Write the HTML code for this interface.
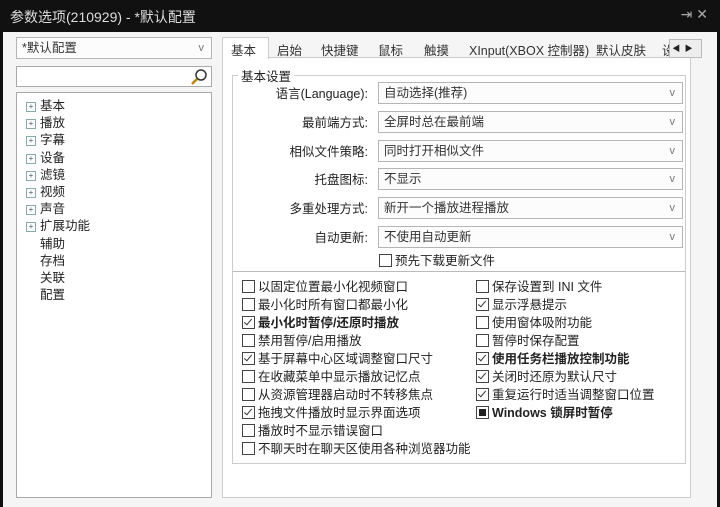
<html><head><style>
body{margin:0;width:720px;height:507px;background:#111;font-family:"Liberation Sans","Noto Sans CJK SC",sans-serif;font-size:12.5px;color:#222;position:relative;overflow:hidden}
.a{position:absolute}
.win{left:3px;top:32px;width:714px;height:475px;background:#f5f5f5}
.title{left:10px;top:7px;color:#ddd;font-size:14px}
.box{background:#fff;border:1px solid #aaa;box-sizing:border-box}
.dd{background:#fcfcfc;border:1px solid #b5b5b5;box-sizing:border-box;height:22px;padding:0 5px;line-height:20px;font-size:12.5px;color:#333}
.dd:after{content:"v";position:absolute;right:7px;top:0;color:#777;font-size:11px}
.lbl{text-align:right;width:140px;font-size:12.5px}
.cb{display:inline-block;width:11px;height:11px;border:1px solid #444;vertical-align:middle;margin:-3px 3px 0 0;background:#fff;position:relative;overflow:hidden}
.ck:after{content:"";position:absolute;left:3px;top:0;width:3px;height:7px;border:solid #333;border-width:0 1.3px 1.3px 0;transform:rotate(40deg)}
.row{font-size:12.5px;white-space:nowrap;height:18px}
.b{font-weight:bold}
.tree div{height:17.2px;font-size:12.5px}
.pl{display:inline-block;width:8px;height:8px;border:1px solid #8aa;font-size:8px;line-height:8px;text-align:center;margin-right:4px;color:#456;vertical-align:1px}
.tab{top:40px;font-size:12.5px;color:#333}
</style></head><body>
<div class="a title">参数选项(210929) - *默认配置</div>
<div class="a" style="right:12px;top:6px;color:#aaa;font-size:14px">⇥ ✕</div>
<div class="a win"></div>
<div class="a dd" style="left:16px;top:37px;width:196px">*默认配置</div>
<div class="a box" style="left:16px;top:66px;width:196px;height:21px"><svg class="a" style="right:3px;top:1px" width="18" height="18"><circle cx="11" cy="7" r="5" fill="none" stroke="#333" stroke-width="1.5"/><line x1="7" y1="11" x2="2" y2="16" stroke="#b80" stroke-width="2.5"/></svg></div>
<div class="a box tree" style="left:16px;top:92px;width:196px;height:406px;padding:2px 0 0 9px">
<div><span class="pl">+</span>基本</div><div><span class="pl">+</span>播放</div><div><span class="pl">+</span>字幕</div><div><span class="pl">+</span>设备</div><div><span class="pl">+</span>滤镜</div><div><span class="pl">+</span>视频</div><div><span class="pl">+</span>声音</div><div><span class="pl">+</span>扩展功能</div>
<div style="padding-left:14px">辅助</div><div style="padding-left:14px">存档</div><div style="padding-left:14px">关联</div><div style="padding-left:14px">配置</div></div>
<div class="a box" style="left:222px;top:57px;width:469px;height:441px;border-color:#ccc"></div>
<div class="a" style="left:222px;top:37px;width:45px;height:21px;background:#fff;border:1px solid #ccc;border-bottom:none"></div>
<div class="a tab" style="left:231px">基本</div><div class="a tab" style="left:277px">启始</div><div class="a tab" style="left:321px">快捷键</div><div class="a tab" style="left:378px">鼠标</div><div class="a tab" style="left:424px">触摸</div><div class="a tab" style="left:469px">XInput(XBOX 控制器)</div><div class="a tab" style="left:596px">默认皮肤</div><div class="a tab" style="left:662px">设</div>
<div class="a" style="left:669px;top:39px;width:31px;height:17px;background:#eee;border:1px solid #bbb;font-size:8px;line-height:17px;color:#222">&nbsp;◀&nbsp;&nbsp;▶</div>
<div class="a" style="left:232px;top:75px;width:452px;height:387px;border:1px solid #ccc"></div>
<div class="a" style="left:233px;top:271px;width:452px;border-top:1px solid #bbb"></div>
<div class="a" style="left:238px;top:66px;background:#fff;padding:0 3px">基本设置</div>
<div class="a lbl" style="left:228px;top:83px">语言(Language):</div>
<div class="a lbl" style="left:228px;top:112px">最前端方式:</div>
<div class="a lbl" style="left:228px;top:141px">相似文件策略:</div>
<div class="a lbl" style="left:228px;top:169px">托盘图标:</div>
<div class="a lbl" style="left:228px;top:198px">多重处理方式:</div>
<div class="a lbl" style="left:228px;top:227px">自动更新:</div>
<div class="a dd" style="left:378px;top:82px;width:305px">自动选择(推荐)</div>
<div class="a dd" style="left:378px;top:111px;width:305px">全屏时总在最前端</div>
<div class="a dd" style="left:378px;top:140px;width:305px">同时打开相似文件</div>
<div class="a dd" style="left:378px;top:168px;width:305px">不显示</div>
<div class="a dd" style="left:378px;top:197px;width:305px">新开一个播放进程播放</div>
<div class="a dd" style="left:378px;top:226px;width:305px">不使用自动更新</div>
<div class="a row" style="left:379px;top:252px;line-height:18px"><span class="cb"></span>预先下载更新文件</div>
<div class="a" style="left:242px;top:278px;line-height:18px">
<div class="row"><span class="cb"></span>以固定位置最小化视频窗口</div>
<div class="row"><span class="cb"></span>最小化时所有窗口都最小化</div>
<div class="row b"><span class="cb ck"></span>最小化时暂停/还原时播放</div>
<div class="row"><span class="cb"></span>禁用暂停/启用播放</div>
<div class="row"><span class="cb ck"></span>基于屏幕中心区域调整窗口尺寸</div>
<div class="row"><span class="cb"></span>在收藏菜单中显示播放记忆点</div>
<div class="row"><span class="cb"></span>从资源管理器启动时不转移焦点</div>
<div class="row"><span class="cb ck"></span>拖拽文件播放时显示界面选项</div>
<div class="row"><span class="cb"></span>播放时不显示错误窗口</div>
<div class="row"><span class="cb"></span>不聊天时在聊天区使用各种浏览器功能</div></div>
<div class="a" style="left:476px;top:278px;line-height:18px">
<div class="row"><span class="cb"></span>保存设置到 INI 文件</div>
<div class="row"><span class="cb ck"></span>显示浮悬提示</div>
<div class="row"><span class="cb"></span>使用窗体吸附功能</div>
<div class="row"><span class="cb"></span>暂停时保存配置</div>
<div class="row b"><span class="cb ck"></span>使用任务栏播放控制功能</div>
<div class="row"><span class="cb ck"></span>关闭时还原为默认尺寸</div>
<div class="row"><span class="cb ck"></span>重复运行时适当调整窗口位置</div>
<div class="row b"><span class="cb"><span style="display:block;margin:2px;width:7px;height:7px;background:#222"></span></span>Windows 锁屏时暂停</div></div>
</body></html>
